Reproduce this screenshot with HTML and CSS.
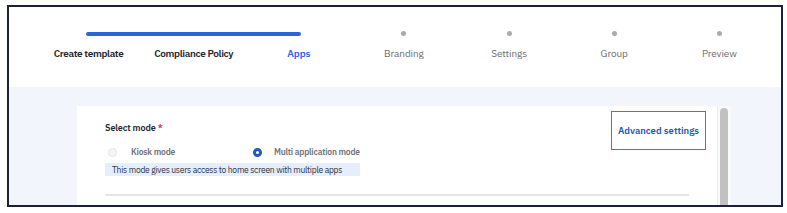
FILE: index.html
```html
<!DOCTYPE html>
<html lang="en">
<head>
<meta charset="utf-8">
<title>Create template - Apps</title>
<link rel="stylesheet" href="styles.css">
</head>
<body>
<div class="frame">
  <header class="stepper">
    <div class="progress-bar"></div>
    <span class="dot dot-4"></span>
    <span class="dot dot-5"></span>
    <span class="dot dot-6"></span>
    <span class="dot dot-7"></span>
    <span class="step-label done">Create template</span>
    <span class="step-label done">Compliance Policy</span>
    <span class="step-label active">Apps</span>
    <span class="step-label">Branding</span>
    <span class="step-label">Settings</span>
    <span class="step-label">Group</span>
    <span class="step-label">Preview</span>
  </header>
  <main class="content">
    <section class="card">
      <div class="card-top">
        <div class="mode-field">
          <div class="field-label">Select mode <span class="req">*</span></div>
          <div class="radio-row">
            <label class="option option-first">
              <span class="radio radio-off"></span>
              <span class="option-text">Kiosk mode</span>
            </label>
            <label class="option">
              <span class="radio radio-on"></span>
              <span class="option-text">Multi application mode</span>
            </label>
          </div>
          <div class="helper">This mode gives users access to home screen with multiple apps</div>
        </div>
        <div class="adv-btn">Advanced settings</div>
      </div>
      <div class="divider"></div>
    </section>
    <div class="scroll-track"><div class="scroll-thumb"></div></div>
  </main>
</div>
</body>
</html>
```

FILE: styles.css
```css
html, body {
  margin: 0;
  padding: 0;
  background: #ffffff;
}
body {
  font-family: "IBM Plex Sans", Roboto, "Noto Sans", sans-serif;
  width: 787px;
  height: 213px;
  overflow: hidden;
}
.frame {
  margin: 5px 4px 0 7px;
  width: 772px;
  height: 198px;
  border: 2px solid #1b2235;
  overflow: hidden;
  display: flex;
  flex-direction: column;
}
.stepper {
  flex: 0 0 80px;
  box-sizing: border-box;
  padding: 24px 0 0 27px;
  background: #ffffff;
  display: grid;
  grid-template-columns: repeat(7, 105.14px);
  grid-template-rows: 5px 14px;
  row-gap: 11px;
  align-items: center;
}
.progress-bar {
  grid-row: 1;
  grid-column: 1 / 4;
  height: 4px;
  margin: 0 50px 0 50px;
  border-radius: 2px;
  background: #2b66d8;
}
.dot {
  grid-row: 1;
  justify-self: center;
  width: 5px;
  height: 5px;
  border-radius: 50%;
  background: #a9abae;
}
.dot-4 { grid-column: 4; }
.dot-5 { grid-column: 5; }
.dot-6 { grid-column: 6; }
.dot-7 { grid-column: 7; }
.step-label {
  grid-row: 2;
  text-align: center;
  font-size: 10px;
  line-height: 14px;
  color: #6a6b6e;
  white-space: nowrap;
  letter-spacing: -0.1px;
}
.step-label.done {
  color: #22262e;
  font-weight: 600;
  letter-spacing: -0.35px;
}
.step-label.active {
  color: #2b66d8;
  font-weight: 600;
  letter-spacing: -0.2px;
}
.content {
  flex: 1 1 auto;
  background: #f2f5fb;
  display: flex;
  padding: 19px 0 0 68px;
}
.card {
  width: 640px;
  box-sizing: border-box;
  background: #ffffff;
  padding: 5px 11px 0 28px;
}
.card-top {
  display: flex;
  justify-content: space-between;
  align-items: flex-start;
}
.mode-field {
  padding-top: 11px;
}
.field-label {
  font-size: 9px;
  line-height: 12px;
  font-weight: 600;
  color: #22262e;
  letter-spacing: -0.1px;
}
.req {
  color: #d2343a;
}
.radio-row {
  display: flex;
  align-items: center;
  margin-top: 12px;
  height: 12px;
}
.option {
  display: flex;
  align-items: center;
}
.option-first {
  width: 145px;
}
.radio {
  box-sizing: border-box;
  width: 9px;
  height: 9px;
  border-radius: 50%;
  margin-left: 3px;
}
.radio-off {
  border: 1px solid #e3e4e6;
  background: #f6f6f7;
  margin-right: 14px;
}
.radio-on {
  border: 3px solid #2258c4;
  background: #ffffff;
  margin-right: 12px;
}
.option-text {
  font-size: 8.5px;
  line-height: 12px;
  font-weight: 600;
  color: #707276;
  letter-spacing: -0.2px;
}
.helper {
  margin-top: 5px;
  height: 13px;
  line-height: 13px;
  padding: 0 7px;
  background: #e6eefb;
  font-size: 8.5px;
  color: #2b3140;
  white-space: nowrap;
  letter-spacing: -0.25px;
}
.adv-btn {
  width: 95px;
  height: 39px;
  box-sizing: border-box;
  border: 1px solid #c4553c;
  background: #ffffff;
  display: flex;
  align-items: center;
  justify-content: center;
  font-size: 9.5px;
  font-weight: 600;
  color: #2157b3;
  white-space: nowrap;
}
.divider {
  margin: 18px 17px 0 0;
  height: 2px;
  background: #e4e5e7;
}
.scroll-track {
  width: 14px;
  box-sizing: border-box;
  background: #fafafa;
  border-left: 1px solid #ececec;
  padding: 2px 3px 0 2px;
}
.scroll-thumb {
  height: 100%;
  width: 8px;
  border-radius: 4px 4px 0 0;
  background: #c1c1c1;
}
```
